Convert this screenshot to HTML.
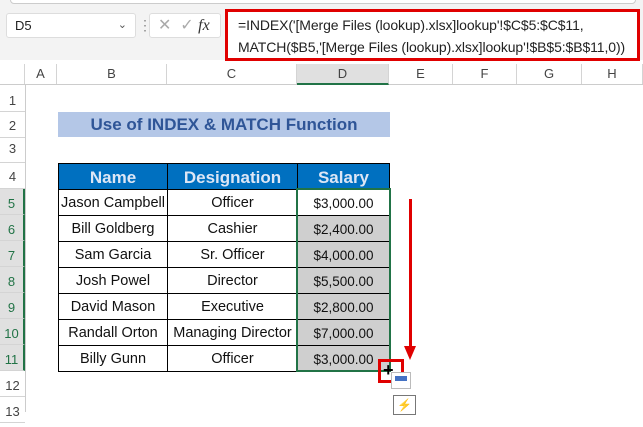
<!DOCTYPE html>
<html><head><style>
*{margin:0;padding:0;box-sizing:border-box}
body{width:643px;height:412px;background:#fff;position:relative;overflow:hidden;font-family:"Liberation Sans",sans-serif}
.a{position:absolute}
.ch{position:absolute;top:64px;height:20px;font-size:13px;color:#444;text-align:center;line-height:20px;border-right:1px solid #d4d4d4}
.rh{position:absolute;left:0;width:25px;font-size:13px;color:#444;text-align:center;border-bottom:1px solid #d4d4d4;background:#fff}
.c{position:absolute;height:27px;border:1px solid #000;font-size:14.5px;text-align:center;line-height:27px;color:#111;white-space:nowrap}
.h{background:#0070c0;color:#dde6f5;font-weight:bold;font-size:17px}
</style></head><body>
<div class="a" style="left:0;top:0;width:643px;height:60px;background:#f3f3f3"></div>
<div class="a" style="left:10px;top:-6px;width:626px;height:10px;border:1px solid #ccc;border-radius:4px;background:#fff"></div>
<div class="a" style="left:6px;top:13px;width:130px;height:25px;background:#fff;border:1px solid #ddd;border-radius:3px;font-size:13px;line-height:23px;padding-left:8px;color:#222">D5<span style="position:absolute;right:8px;color:#555;font-size:11px">&#8964;</span></div>
<div class="a" style="left:138px;top:17px;color:#888;font-size:14px">&#8942;</div>
<div class="a" style="left:149px;top:13px;width:72px;height:25px;background:#fff;border:1px solid #ddd;border-radius:3px;color:#aaa;font-size:16px;line-height:23px;padding-left:8px">&#10005;&nbsp;&nbsp;&#10003;&nbsp;<i style="font-family:'Liberation Serif',serif;color:#333">fx</i></div>
<div class="a" style="left:225px;top:9px;width:415px;height:52px;background:#fff;border:3px solid #e00000;font-size:14px;line-height:22px;padding:2px 0 0 10px;color:#222;white-space:nowrap;letter-spacing:-0.1px">=INDEX('[Merge Files (lookup).xlsx]lookup'!$C$5:$C$11,<br>MATCH($B5,'[Merge Files (lookup).xlsx]lookup'!$B$5:$B$11,0))</div>
<div class="a" style="left:0;top:63px;width:643px;height:22px;background:#fff;border-bottom:1px solid #ccc"></div>
<div class="ch" style="left:0;width:25px"></div>
<div class="ch" style="left:25px;width:32px">A</div>
<div class="ch" style="left:57px;width:110px">B</div>
<div class="ch" style="left:167px;width:130px">C</div>
<div class="ch" style="left:297px;width:92px;background:#e0e0e0;border-bottom:2px solid #217346;height:21px">D</div>
<div class="ch" style="left:389px;width:64px">E</div>
<div class="ch" style="left:453px;width:64px">F</div>
<div class="ch" style="left:517px;width:65px">G</div>
<div class="ch" style="left:582px;width:61px">H</div>
<div class="a" style="left:25px;top:85px;width:1px;height:327px;background:#ccc"></div>
<div class="rh" style="top:85px;height:27px;line-height:32px">1</div>
<div class="rh" style="top:112px;height:26px;line-height:28px">2</div>
<div class="rh" style="top:138px;height:25px;line-height:22px">3</div>
<div class="rh" style="top:163px;height:26px;line-height:28px">4</div>
<div class="rh" style="top:189px;height:26px;line-height:30px;background:#e0e0e0;color:#217346;border-right:2px solid #217346">5</div>
<div class="rh" style="top:215px;height:26px;line-height:30px;background:#e0e0e0;color:#217346;border-right:2px solid #217346">6</div>
<div class="rh" style="top:241px;height:26px;line-height:30px;background:#e0e0e0;color:#217346;border-right:2px solid #217346">7</div>
<div class="rh" style="top:267px;height:26px;line-height:30px;background:#e0e0e0;color:#217346;border-right:2px solid #217346">8</div>
<div class="rh" style="top:293px;height:26px;line-height:30px;background:#e0e0e0;color:#217346;border-right:2px solid #217346">9</div>
<div class="rh" style="top:319px;height:26px;line-height:30px;background:#e0e0e0;color:#217346;border-right:2px solid #217346">10</div>
<div class="rh" style="top:345px;height:26px;line-height:30px;background:#e0e0e0;color:#217346;border-right:2px solid #217346">11</div>
<div class="rh" style="top:371px;height:26px;line-height:30px">12</div>
<div class="rh" style="top:397px;height:26px;line-height:30px">13</div>
<div class="a" style="left:58px;top:112px;width:332px;height:25px;background:#b4c7e7;color:#2f5597;font-weight:bold;font-size:17px;text-align:center;line-height:25px">Use of INDEX &amp; MATCH Function</div>
<div class="c h" style="left:58px;top:163px;width:110px">Name</div>
<div class="c h" style="left:167px;top:163px;width:131px">Designation</div>
<div class="c h" style="left:297px;top:163px;width:93px">Salary</div>
<div class="c" style="left:58px;top:189px;width:110px">Jason Campbell</div><div class="c" style="left:167px;top:189px;width:131px">Officer</div><div class="c" style="left:297px;top:189px;width:93px;font-size:13.5px">$3,000.00</div>
<div class="c" style="left:58px;top:215px;width:110px">Bill Goldberg</div><div class="c" style="left:167px;top:215px;width:131px">Cashier</div><div class="c" style="left:297px;top:215px;width:93px;background:#cfcfcf;font-size:13.5px">$2,400.00</div>
<div class="c" style="left:58px;top:241px;width:110px">Sam Garcia</div><div class="c" style="left:167px;top:241px;width:131px">Sr. Officer</div><div class="c" style="left:297px;top:241px;width:93px;background:#cfcfcf;font-size:13.5px">$4,000.00</div>
<div class="c" style="left:58px;top:267px;width:110px">Josh Powel</div><div class="c" style="left:167px;top:267px;width:131px">Director</div><div class="c" style="left:297px;top:267px;width:93px;background:#cfcfcf;font-size:13.5px">$5,500.00</div>
<div class="c" style="left:58px;top:293px;width:110px">David Mason</div><div class="c" style="left:167px;top:293px;width:131px">Executive</div><div class="c" style="left:297px;top:293px;width:93px;background:#cfcfcf;font-size:13.5px">$2,800.00</div>
<div class="c" style="left:58px;top:319px;width:110px">Randall Orton</div><div class="c" style="left:167px;top:319px;width:131px">Managing Director</div><div class="c" style="left:297px;top:319px;width:93px;background:#cfcfcf;font-size:13.5px">$7,000.00</div>
<div class="c" style="left:58px;top:345px;width:110px">Billy Gunn</div><div class="c" style="left:167px;top:345px;width:131px">Officer</div><div class="c" style="left:297px;top:345px;width:93px;background:#cfcfcf;font-size:13.5px">$3,000.00</div>
<div class="a" style="left:296px;top:188px;width:95px;height:184px;border:2px solid #217346"></div>
<div class="a" style="left:409px;top:199px;width:3px;height:150px;background:#e00000"></div>
<div class="a" style="left:404px;top:346px;width:0;height:0;border-left:6px solid transparent;border-right:6px solid transparent;border-top:14px solid #e00000"></div>
<div class="a" style="left:378px;top:359px;width:26px;height:24px;border:3px solid #e00000"></div>
<div class="a" style="left:383px;top:361px;font-size:18px;font-weight:bold;line-height:18px">+</div>
<div class="a" style="left:391px;top:372px;width:20px;height:17px;border:1px solid #bbb;background:#fff"><div style="margin:3px 3px;width:12px;height:5px;background:#4472c4"></div></div>
<div class="a" style="left:393px;top:395px;width:23px;height:20px;border:1px solid #777;background:#fff;color:#e07000;font-size:12px;line-height:18px;padding-left:3px">&#9889;</div>
</body></html>
